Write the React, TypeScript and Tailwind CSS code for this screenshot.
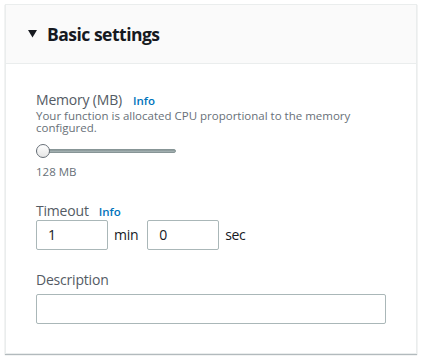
export default function App() {
  return (
    <div className="min-h-screen bg-white pt-[4px] pl-[5px]" style={{ fontFamily: '"Open Sans", "Liberation Sans", sans-serif' }}>
      <div className="w-[412px] h-[350px] border border-[#eaeded] bg-white shadow-[0_1px_1px_0_rgba(0,28,36,0.3)]">
        {/* Header */}
        <div className="h-[59px] bg-[#fafafa] border-b border-[#eaeded] flex items-center pl-[22px]">
          <svg width="9" height="8" viewBox="0 0 9 8" className="mr-[10px]">
            <path d="M0 0 L9 0 L4.5 7.5 Z" fill="#16191f" />
          </svg>
          <h2 className="text-[17.5px] font-bold text-[#16191f] tracking-[-0.5px]">Basic settings</h2>
        </div>

        {/* Body */}
        <div className="pl-[30px] pr-[30px] pt-[27px]">
          <div className="flex items-baseline gap-[11px]">
            <span className="text-[14px] text-[#545b64] leading-[18px] tracking-[-0.2px]">Memory (MB)</span>
            <span className="text-[11.5px] font-semibold text-[#0073bb]">Info</span>
          </div>
          <p className="text-[11.5px] leading-[12px] text-[#687078] mt-[1px] w-[340px]">
            Your function is allocated CPU proportional to the memory configured.
          </p>
          <div className="relative w-[140px] h-[14px] mt-[10px] flex items-center">
            <div className="w-full h-[4px] rounded-full bg-gradient-to-b from-[#879596] to-[#aab7b8] border border-[#879596]" />
            <div className="absolute left-0 top-0 w-[14px] h-[14px] rounded-full bg-gradient-to-b from-white to-[#e6e6e6] border border-[#687078]" />
          </div>
          <div className="text-[11.5px] text-[#687078] mt-[5px]">128 MB</div>

          <div className="flex items-baseline gap-[10px] mt-[21px] h-[18px]">
            <span className="text-[14px] text-[#545b64] leading-[18px] tracking-[-0.2px]">Timeout</span>
            <span className="text-[11.5px] font-semibold text-[#0073bb] leading-[18px]">Info</span>
          </div>
          <div className="flex items-center mt-0">
            <input
              defaultValue="1"
              className="w-[72px] h-[30px] border border-[#aab7b8] rounded-[2px] px-[11px] text-[14px] text-[#16191f] outline-none"
            />
            <span className="text-[14px] text-[#16191f] ml-[6px] mr-[9px] tracking-[-0.3px]">min</span>
            <input
              defaultValue="0"
              className="w-[72px] h-[30px] border border-[#aab7b8] rounded-[2px] px-[11px] text-[14px] text-[#16191f] outline-none"
            />
            <span className="text-[14px] text-[#16191f] ml-[6px] tracking-[-0.3px]">sec</span>
          </div>

          <div className="text-[14px] text-[#545b64] leading-[18px] mt-[21px] tracking-[-0.2px]">Description</div>
          <input className="block w-[350px] h-[30px] border border-[#aab7b8] rounded-[2px] mt-[5px] outline-none" />
        </div>
      </div>
    </div>
  );
}
